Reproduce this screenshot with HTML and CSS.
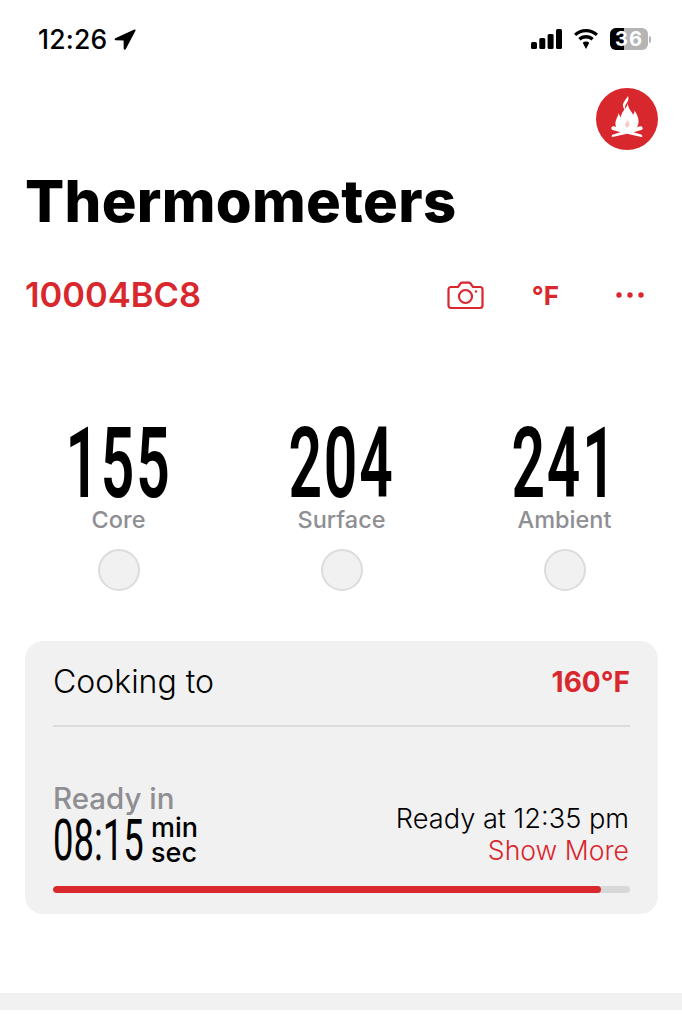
FILE: index.html
```html
<!DOCTYPE html>
<html lang="en">
<head>
<meta charset="utf-8">
<title>Thermometers</title>
<link rel="stylesheet" href="styles.css">
</head>
<body>
<div class="phone">
  <header class="status">
    <div class="status-left">
      <span class="clock">12:26</span>
      <svg class="loc" width="22" height="22" viewBox="0 0 22 22"><path d="M20.300.500 1.300 9.300c-1.100.5-.8 2 .4 2l7.900.1.100 8.300c0 1.200 1.600 1.500 2.100.4L21.500 1.700c.4-.8-.4-1.600-1.200-1.200z" fill="#000"/></svg>
    </div>
    <div class="status-right">
      <svg width="31" height="20" viewBox="0 0 31 20"><rect x="0" y="13" width="6" height="7" rx="1.500"/><rect x="8.300" y="9" width="6" height="11" rx="1.500"/><rect x="16.600" y="5" width="6" height="15" rx="1.500"/><rect x="25" y="0" width="6" height="20" rx="1.500"/></svg>
      <svg width="28" height="20" viewBox="0 0 28 20"><path d="M14 3.200c3.800 0 7.200 1.500 9.800 3.900l2.200-2.400C22.800 1.800 18.600 0 14 0S5.200 1.800 2 4.700l2.200 2.400C6.800 4.700 10.200 3.200 14 3.200z"/><path d="M14 9.400c2.100 0 4 .8 5.500 2.100l2.200-2.400C19.600 7.200 17 6.100 14 6.100S8.400 7.200 6.300 9.100l2.200 2.400C10 10.200 11.900 9.400 14 9.400z"/><path d="M14 12.500c-1.300 0-2.400.5-3.300 1.200L14 20l3.300-6.300c-.9-.7-2-1.200-3.300-1.200z"/></svg>
      <div class="battery-wrap">
        <div class="battery"><div class="battery-fill"></div><span class="battery-num">36</span></div>
        <div class="battery-nub"></div>
      </div>
    </div>
  </header>

  <div class="top-action">
    <div class="flame-btn">
      <svg class="flame" viewBox="0 0 34 44"><path fill="#fff" d="M18 0c1.500 4-.5 6.500-2.500 9.500-1 2-1 4 0 6-3.500-3-3.500-6.500-1.500-9.500 1-2 3-4 4-6z"/><path fill="#fff" d="M18 8c0 6 4 8 5.500 12 1-1 1.500-2.500 1.500-4.500 3 4.500 5.500 9.500 4 15-.6 2.500-2.500 5-5 7.500H10c-3-2.500-5.500-4.500-5.500-8.500 0-4 2.500-6.500 3.500-11 1 2 1.500 3.500 2.500 4.500C10.500 17 16 14 18 8z"/><path fill="#f6c9ca" d="M18 25c0 2 1.500 3.500 1.500 5.500 0 1.500-1 2.500-2.500 3.500-1.500-1-2.300-2-2-3.500.3-1.500 2.500-2.800 3-5.500z"/><path fill="#fff" d="M3 32.500l14 4.500 14-4.500c1.500-.5 2.800.6 2.800 2 0 1-.6 1.600-1.500 1.900L24 39l8 2.300c.9.300 1.500 1 1.500 2 0 .5-.3.700-1 .7-.4 0-.8-.1-1.200-.2L17 40.500 2.700 43.800c-.4.100-.8.200-1.200.2-.7 0-1-.2-1-.7 0-1 .6-1.700 1.500-2L10 39l-8.300-2.600C.8 36.100.2 35.500.2 34.500c0-1.400 1.300-2.500 2.800-2z"/></svg>
    </div>
  </div>

  <h1 class="title">Thermometers</h1>

  <div class="device-row">
    <span class="device-id">10004BC8</span>
    <div class="device-actions">
      <svg class="camera" width="37" height="29" viewBox="0 0 37 29" fill="none" stroke="#d9272e" stroke-width="2.200"><path d="M4 6h7l2.500-3.500c.4-.5.8-.8 1.500-.8h7c.7 0 1.100.3 1.500.8L26 6h7c1.500 0 2.500 1 2.500 2.500v16c0 1.500-1 2.500-2.500 2.500H4c-1.500 0-2.500-1-2.500-2.500v-16C1.500 7 2.500 6 4 6z"/><circle cx="18.500" cy="15.500" r="6.500"/><circle cx="29" cy="10.500" r="1.200" fill="#d9272e" stroke="none"/></svg>
      <span class="unit">°F</span>
      <svg class="dots" width="28" height="6" viewBox="0 0 28 6" fill="#d9272e"><circle cx="3" cy="3" r="2.700"/><circle cx="14" cy="3" r="2.700"/><circle cx="25" cy="3" r="2.700"/></svg>
    </div>
  </div>

  <section class="probes">
    <div class="probe"><div class="temp"><span>155</span></div><div class="probe-label">Core</div><div class="radio"></div></div>
    <div class="probe"><div class="temp"><span>204</span></div><div class="probe-label">Surface</div><div class="radio"></div></div>
    <div class="probe"><div class="temp"><span>241</span></div><div class="probe-label">Ambient</div><div class="radio"></div></div>
  </section>

  <section class="card">
    <div class="card-head">
      <span class="cook-label">Cooking to</span>
      <span class="cook-target">160°F</span>
    </div>
    <div class="card-body">
      <div class="ready-left">
        <div class="ready-in">Ready in</div>
        <div class="countdown">
          <div class="time"><span>08:15</span></div>
          <div class="units"><span>min</span><span>sec</span></div>
        </div>
      </div>
      <div class="ready-right">
        <div class="ready-at">Ready at 12:35 pm</div>
        <div class="show-more">Show More</div>
      </div>
    </div>
    <div class="progress"><div class="progress-fill" style="width:95%"></div></div>
  </section>

  <div class="bottom-band"></div>
</div>
</body>
</html>
```
FILE: styles.css
```css
* { box-sizing: border-box; }
html, body { margin: 0; padding: 0; background: #fff; }
body { font-family: "Inter", "Liberation Sans", sans-serif; color: #000; }
.phone { width: 682px; height: 1024px; overflow: hidden; display: flex; flex-direction: column; }

.status { height: 78px; padding: 27px 31px 0 38px; display: flex; justify-content: space-between; align-items: flex-start; }
.status-left { display: flex; align-items: center; gap: 7px; }
.clock { font-size: 26.500px; line-height: 25px; font-weight: 500; letter-spacing: .2px; }
.status-right { display: flex; align-items: center; gap: 10px; margin-top: 1px; }
.battery-wrap { display: flex; align-items: center; gap: 1px; }
.battery { position: relative; width: 38px; height: 22px; border-radius: 6px; background: #b5b5b5; overflow: hidden; }
.battery-fill { width: 14px; height: 100%; background: #000; }
.battery-num { position: absolute; inset: 0; text-align: center; color: #fff; font-size: 20px; line-height: 22px; font-weight: 700; letter-spacing: 1px; }
.battery-nub { width: 2px; height: 7px; border-radius: 0 2px 2px 0; background: #b5b5b5; }

.top-action { display: flex; justify-content: flex-end; padding: 10px 24px 0 0; }
.flame-btn { width: 62px; height: 62px; border-radius: 50%; background: #d9272e; display: flex; align-items: center; justify-content: center; }
.flame { width: 32px; height: 41px; margin-bottom: 5px; }

.title { margin: 20px 0 0; padding-left: 25px; font-size: 58px; line-height: 62px; font-weight: 800; letter-spacing: .3px; }

.device-row { margin-top: 43px; padding: 0 38px 0 25px; display: flex; justify-content: space-between; align-items: center; height: 38px; }
.device-id { color: #d9272e; font-size: 34.500px; font-weight: 600; }
.device-actions { display: flex; align-items: center; margin-top: 2px; }
.unit { color: #d9272e; font-size: 26px; font-weight: 700; margin: 0 57px 0 48px; }

.probes { margin-top: 108px; display: grid; grid-template-columns: repeat(3, 223px); padding-left: 7px; }
.probe { display: flex; flex-direction: column; align-items: center; }
.temp { height: 84px; line-height: 86px; font-family: "Roboto", "Liberation Sans", sans-serif; font-weight: 600; font-size: 98px; white-space: nowrap; }
.temp span { display: inline-block; transform: scaleX(.6); letter-spacing: 3px; }
.probe-label { color: #8e8e93; font-size: 23.500px; line-height: 30px; font-weight: 500; }
.radio { margin-top: 14px; width: 42px; height: 42px; border-radius: 50%; background: #f1f1f1; border: 2px solid #dcdcdc; }

.card { margin: 50px 24px 0 25px; height: 273px; background: #f1f1f1; border-radius: 18px; padding: 0 28px; display: flex; flex-direction: column; }
.card-head { height: 86px; display: flex; justify-content: space-between; align-items: center; border-bottom: 2px solid #dcdcdc; }
.cook-label { font-size: 32px; font-weight: 350; margin-bottom: 3px; }
.cook-target { color: #d9272e; font-size: 28px; font-weight: 700; margin-bottom: 3px; }
.card-body { display: flex; justify-content: space-between; align-items: flex-end; margin-top: 55px; }
.ready-in { color: #8e8e93; font-size: 29.500px; line-height: 32px; font-weight: 500; }
.countdown { display: flex; align-items: center; gap: 6px; margin-top: 2px; }
.time { font-family: "Roboto", "Liberation Sans", sans-serif; font-weight: 400; font-size: 57px; line-height: 50px; height: 50px; width: 92px; }
.time span { display: inline-block; transform: scaleX(.64); transform-origin: left center; white-space: nowrap; }
.units { display: flex; flex-direction: column; font-size: 27px; line-height: 25px; font-weight: 500; margin-top: -3px; }
.ready-right { text-align: right; padding-right: 1px; }
.ready-at { font-size: 27.200px; line-height: 32px; font-weight: 350; }
.show-more { color: #d9272e; font-size: 26.600px; line-height: 31px; font-weight: 350; }
.progress { margin-top: 20px; height: 7px; border-radius: 4px; background: #d8d8d8; overflow: hidden; }
.progress-fill { height: 100%; background: #d9272e; border-radius: 4px; }

.bottom-band { margin-top: 79px; height: 17px; background: #f1f1f1; }
```
